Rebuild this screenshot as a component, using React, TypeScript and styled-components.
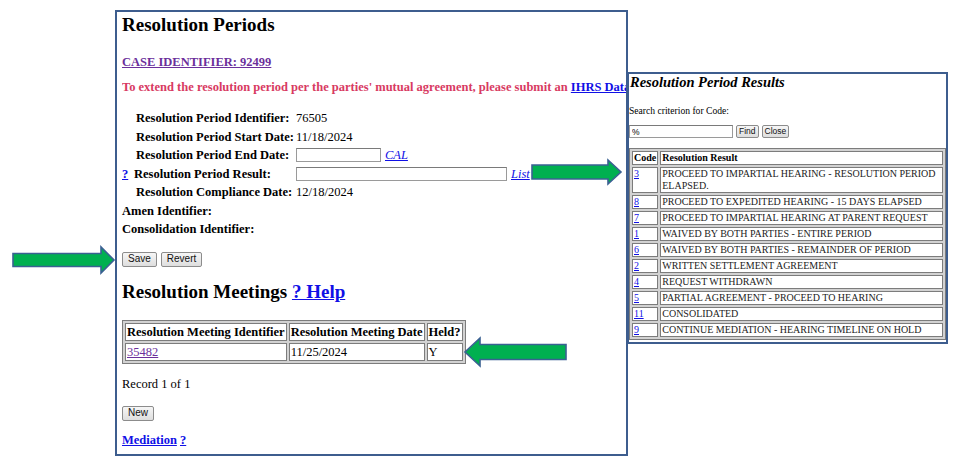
import React from 'react'
import styled, { createGlobalStyle } from 'styled-components'

const GlobalStyle = createGlobalStyle`
  html, body {
    margin: 0;
    padding: 0;
    background: #fff;
  }
  body {
    font-family: 'Liberation Serif', 'Times New Roman', serif;
    color: #000;
  }
`

const Canvas = styled.div`
  position: relative;
  width: 955px;
  height: 458px;
  overflow: hidden;
  padding: 10px 0 0 115px;
  box-sizing: border-box;
`

const Panel = styled.div`
  width: 513px;
  height: 446px;
  box-sizing: border-box;
  border: 2px solid #3d5d8e;
  padding: 2px 5px 0;
  font-size: 12.5px;
  line-height: 18px;
`

const Heading = styled.h2<{ $gap?: number }>`
  margin: ${p => p.$gap || 0}px 0 0;
  font-size: 19px;
  line-height: 22px;
  font-weight: bold;
  white-space: nowrap;
`

const Para = styled.p<{ $gap: number }>`
  margin: ${p => p.$gap}px 0 0;
  white-space: nowrap;
`

const Link = styled.a<{ $visited?: boolean; $italic?: boolean; $bold?: boolean }>`
  color: ${p => (p.$visited ? '#6b2f9b' : '#1010e6')};
  text-decoration: underline;
  font-style: ${p => (p.$italic ? 'italic' : 'normal')};
  font-weight: ${p => (p.$bold ? 'bold' : 'inherit')};
`

/* the notice runs under the popup window, so it is cut at the window's edge */
const Notice = styled(Para)`
  color: #d83a62;
  font-weight: bold;
  overflow: hidden;
  margin-right: -5px;
`

const FieldGrid = styled.div`
  margin-top: 13px;
  display: grid;
  grid-template-columns: 12px 162px auto;
  grid-auto-rows: 18.5px;
  align-items: center;
  white-space: nowrap;
`

const Marker = styled.span`
  font-weight: bold;
`

const Label = styled.span<{ $wide?: boolean; $tight?: boolean }>`
  font-weight: bold;
  grid-column: ${p => (p.$wide ? '1 / span 2' : 'auto')};
  padding-left: ${p => (p.$wide || p.$tight ? 0 : 2)}px;
`

const Value = styled.span`
  display: flex;
  align-items: center;
  gap: 4px;
`

const TextBox = styled.input<{ $w: number }>`
  width: ${p => p.$w}px;
  height: 14px;
  box-sizing: border-box;
  border: 1px solid #9a9a9a;
  border-top-color: #7a7a7a;
  padding: 0 2px;
  margin: 0;
  font: 10px 'Liberation Sans', Arial, sans-serif;
  background: #fff;
`

const ButtonRow = styled.div<{ $gap: number }>`
  margin-top: ${p => p.$gap}px;
  display: flex;
  gap: 4px;
`

const Btn = styled.button<{ $small?: boolean }>`
  height: ${p => (p.$small ? 13 : 15)}px;
  padding: 0 ${p => (p.$small ? 2 : 5)}px;
  margin: 0;
  box-sizing: border-box;
  border: 1px solid #8c8c8c;
  border-radius: 2px;
  background: linear-gradient(#f6f6f6, #dedede);
  font: ${p => (p.$small ? 8.5 : 10)}px 'Liberation Sans', Arial, sans-serif;
  color: #111;
  line-height: 1;
`

const GridTable = styled.table<{ $gap: number; $size: number; $line: number; $width?: string }>`
  margin-top: ${p => p.$gap}px;
  width: ${p => p.$width || 'auto'};
  border: 1px solid #7c7c7c;
  border-spacing: 2px;
  background: #d2d2d2;
  font-size: ${p => p.$size}px;
  line-height: ${p => p.$line}px;

  th,
  td {
    background: #fff;
    border: 1px solid #7c7c7c;
    padding: 0 1px;
    text-align: left;
    vertical-align: top;
    white-space: nowrap;
  }

  th {
    font-weight: bold;
  }
`

const ResultCell = styled.td`
  && {
    white-space: normal;
    color: #222;
  }
`

const Popup = styled.div`
  position: absolute;
  left: 627px;
  top: 72px;
  width: 321px;
  height: 272px;
  box-sizing: border-box;
  border: 2px solid #3d5d8e;
  background: #fff;
`

const PopupTitle = styled.h3`
  margin: 0;
  padding-left: 1px;
  font-size: 14.5px;
  line-height: 17px;
  font-weight: bold;
  font-style: italic;
`

const SearchLabel = styled.div`
  margin-top: 14px;
  font-size: 9.6px;
  line-height: 12px;
`

const SearchRow = styled.div`
  margin-top: 8px;
  display: flex;
  align-items: center;
  gap: 3px;
`

const SearchBox = styled(TextBox)`
  height: 13px;
  font-size: 8.5px;
`

const ArrowSvg = styled.svg<{ $left: number; $top: number; $flip?: boolean }>`
  position: absolute;
  left: ${p => p.$left}px;
  top: ${p => p.$top}px;
  transform: ${p => (p.$flip ? 'scaleX(-1)' : 'none')};
  overflow: visible;
`

type ArrowProps = {
  left: number
  top: number
  width: number
  height: number
  body: number
  head: number
  flip?: boolean
}

function Arrow({ left, top, width, height, body, head, flip }: ArrowProps) {
  const y1 = (height - body) / 2
  const y2 = (height + body) / 2
  const hx = width - head
  const points = `1,${y1} ${hx},${y1} ${hx},1 ${width - 1},${height / 2} ${hx},${height - 1} ${hx},${y2} 1,${y2}`
  return (
    <ArrowSvg $left={left} $top={top} $flip={flip} width={width} height={height} viewBox={`0 0 ${width} ${height}`}>
      <polygon points={points} fill="#00b050" stroke="#3a6192" strokeWidth={1.6} />
    </ArrowSvg>
  )
}

const results = [
  ['3', 'PROCEED TO IMPARTIAL HEARING - RESOLUTION PERIOD ELAPSED.'],
  ['8', 'PROCEED TO EXPEDITED HEARING - 15 DAYS ELAPSED'],
  ['7', 'PROCEED TO IMPARTIAL HEARING AT PARENT REQUEST'],
  ['1', 'WAIVED BY BOTH PARTIES - ENTIRE PERIOD'],
  ['6', 'WAIVED BY BOTH PARTIES - REMAINDER OF PERIOD'],
  ['2', 'WRITTEN SETTLEMENT AGREEMENT'],
  ['4', 'REQUEST WITHDRAWN'],
  ['5', 'PARTIAL AGREEMENT - PROCEED TO HEARING'],
  ['11', 'CONSOLIDATED'],
  ['9', 'CONTINUE MEDIATION - HEARING TIMELINE ON HOLD'],
]

export default function App() {
  return (
    <>
      <GlobalStyle />
      <Canvas>
        <Panel>
          <Heading>Resolution Periods</Heading>
          <Para $gap={17}>
            <Link href="#" $visited $bold>CASE IDENTIFIER: 92499</Link>
          </Para>
          <Notice $gap={7}>
            To extend the resolution period per the parties' mutual agreement, please submit an{' '}
            <Link href="#">IHRS Data Correction Request</Link>
          </Notice>

          <FieldGrid>
            <Marker />
            <Label>Resolution Period Identifier:</Label>
            <Value>76505</Value>

            <Marker />
            <Label>Resolution Period Start Date:</Label>
            <Value>11/18/2024</Value>

            <Marker />
            <Label>Resolution Period End Date:</Label>
            <Value>
              <TextBox $w={85} />
              <Link href="#" $italic>CAL</Link>
            </Value>

            <Marker>
              <Link href="#">?</Link>
            </Marker>
            <Label $tight>Resolution Period Result:</Label>
            <Value>
              <TextBox $w={211} />
              <Link href="#" $italic>List</Link>
            </Value>

            <Marker />
            <Label>Resolution Compliance Date:</Label>
            <Value>12/18/2024</Value>

            <Label $wide>Amen Identifier:</Label>
            <Value />

            <Label $wide>Consolidation Identifier:</Label>
            <Value />
          </FieldGrid>

          <ButtonRow $gap={13}>
            <Btn>Save</Btn>
            <Btn>Revert</Btn>
          </ButtonRow>

          <Heading $gap={14}>
            Resolution Meetings <Link href="#">? Help</Link>
          </Heading>

          <GridTable $gap={17} $size={12.5} $line={16}>
            <thead>
              <tr>
                <th>Resolution Meeting Identifier</th>
                <th>Resolution Meeting Date</th>
                <th>Held?</th>
              </tr>
            </thead>
            <tbody>
              <tr>
                <td>
                  <Link href="#" $visited>35482</Link>
                </td>
                <td>11/25/2024</td>
                <td>Y</td>
              </tr>
            </tbody>
          </GridTable>

          <Para $gap={11}>Record 1 of 1</Para>

          <ButtonRow $gap={13}>
            <Btn>New</Btn>
          </ButtonRow>

          <Para $gap={10}>
            <Link href="#" $bold>Mediation</Link> <Link href="#" $bold>?</Link>
          </Para>
        </Panel>

        <Popup>
          <PopupTitle>Resolution Period Results</PopupTitle>
          <SearchLabel>Search criterion for Code:</SearchLabel>
          <SearchRow>
            <SearchBox $w={104} defaultValue="%" />
            <Btn $small>Find</Btn>
            <Btn $small>Close</Btn>
          </SearchRow>
          <GridTable $gap={10} $size={10} $line={12} $width="100%">
            <thead>
              <tr>
                <th>Code</th>
                <th>Resolution Result</th>
              </tr>
            </thead>
            <tbody>
              {results.map(([code, text]) => (
                <tr key={code}>
                  <td>
                    <Link href="#">{code}</Link>
                  </td>
                  <ResultCell>{text}</ResultCell>
                </tr>
              ))}
            </tbody>
          </GridTable>
        </Popup>

        <Arrow left={12} top={246} width={103} height={28} body={13} head={14} />
        <Arrow left={531} top={159} width={91} height={26} body={14} head={14} />
        <Arrow left={464} top={337} width={103} height={30} body={15} head={16} flip />
      </Canvas>
    </>
  )
}
